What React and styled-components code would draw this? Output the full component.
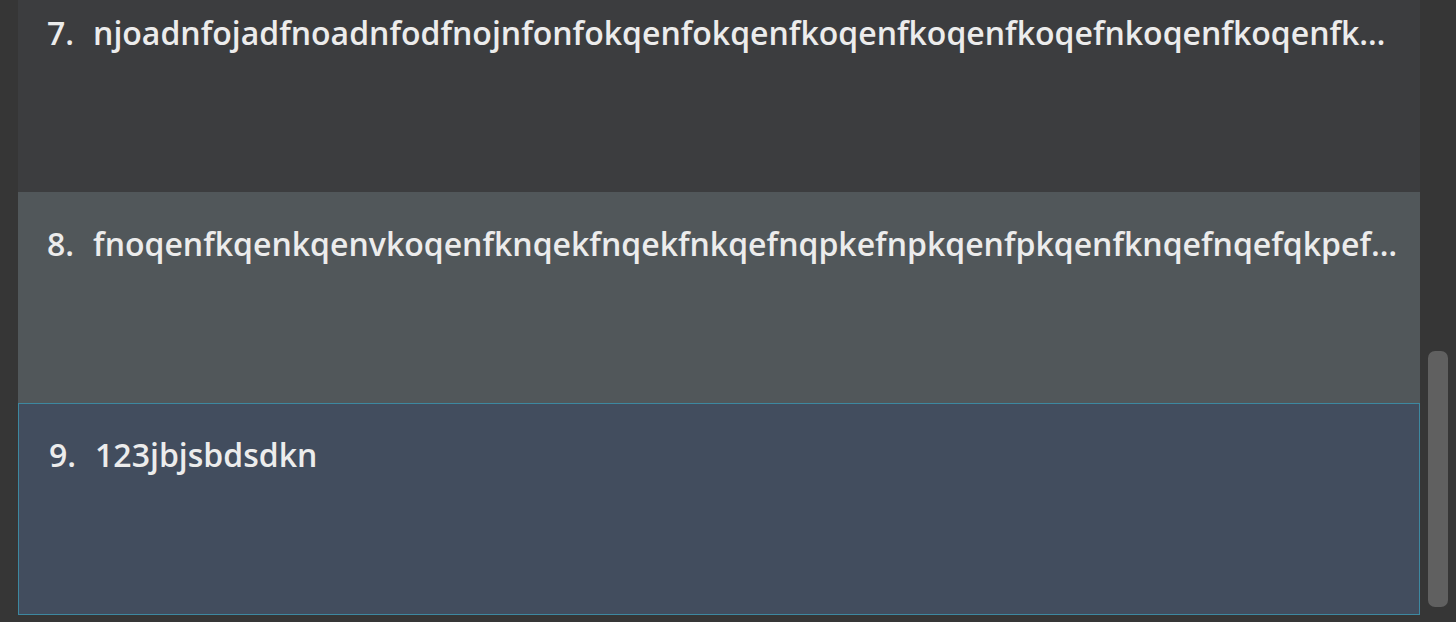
import React from 'react'
import styled, { createGlobalStyle } from 'styled-components'

const GlobalStyle = createGlobalStyle`
  html, body {
    margin: 0;
    padding: 0;
    background: #363636;
    overflow: hidden;
  }
  body {
    font-family: "Open Sans", "Noto Sans", sans-serif;
  }
`

const items = [
  {
    id: 7,
    text: 'njoadnfojadfnoadnfodfnojnfonfokqenfokqenfkoqenfkoqenfkoqefnkoqenfkoqenfkoqenfkoqenfkoqenfkqenf',
  },
  {
    id: 8,
    text: 'fnoqenfkqenkqenvkoqenfknqekfnqekfnkqefnqpkefnpkqenfpkqenfknqefnqefqkpefnqkefnqkefnqkenf',
  },
  { id: 9, text: '123jbjsbdsdkn', selected: true },
]

function App() {
  return (
    <>
      <GlobalStyle />
      <Page>
        <Viewport>
          <List>
            {items.map((item) => (
              <Cell key={item.id} $id={item.id} $selected={item.selected}>
                <Index>{item.id}.</Index>
                <Title>{item.text}</Title>
              </Cell>
            ))}
          </List>
        </Viewport>
        <Track>
          <Thumb />
        </Track>
      </Page>
    </>
  )
}

const Page = styled.div`
  display: flex;
  height: 622px;
  width: 1456px;
  padding-left: 18px;
  box-sizing: border-box;
  background: #363636;
`

const Viewport = styled.div`
  flex: 0 0 1402px;
  height: 615px;
  overflow: hidden;
`

const List = styled.div`
  display: flex;
  flex-direction: column;
  margin-top: -19px;
`

const cellBg = (p) => {
  if (p.$selected) return '#424d5e'
  return p.$id % 2 === 0 ? '#51575a' : '#3c3d3f'
}

const Cell = styled.div`
  display: flex;
  align-items: flex-start;
  box-sizing: border-box;
  height: ${(p) => (p.$selected ? '212px' : '211px')};
  padding: ${(p) => (p.$selected ? '29px 20px 0 30px' : '30px 22px 0 29px')};
  background: ${cellBg};
  border: ${(p) => (p.$selected ? '1px solid #3d88a0' : 'none')};
  color: #ececec;
  font-size: 32px;
  font-weight: 600;
  line-height: 44px;
`

const Index = styled.span`
  flex: none;
  margin-right: 19px;
`

const Title = styled.span`
  flex: 1;
  min-width: 0;
  white-space: nowrap;
  overflow: hidden;
  text-overflow: ellipsis;
`

const Track = styled.div`
  flex: 1;
  display: flex;
  justify-content: center;
`

const Thumb = styled.div`
  width: 20px;
  height: 256px;
  margin-top: 351px;
  border-radius: 7px;
  background: #606060;
`

export default App
